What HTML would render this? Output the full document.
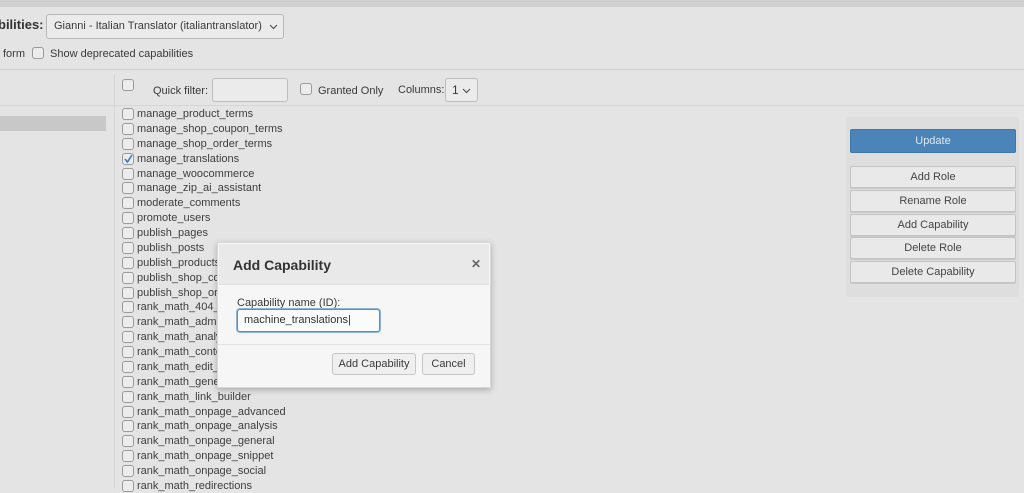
<!DOCTYPE html>
<html><head><style>
body{margin:0;width:1024px;height:489px;overflow:hidden;background:#e4e4e4;font-family:"Liberation Sans",sans-serif;color:#3a3a3a;position:relative}
.a{position:absolute}
.cb{position:absolute;width:10px;height:10px;border:1px solid #9a9a9a;border-radius:3px;background:#ececec}
.it{position:absolute;left:137px;font-size:11px;color:#3e3e3e;line-height:13px}
.btn{position:absolute;left:850px;width:164px;height:20px;border:1px solid #c4c4c4;border-radius:2px;background:#e9e9e9;font-size:11px;text-align:center;line-height:20px;color:#444;box-shadow:0 1px 0 #c8c8c8}
</style></head><body>
<div class="a" style="left:0;top:0;width:1024px;height:7px;background:#cfcfcf"></div>
<div class="a" style="left:-2px;top:17px;font-size:13px;font-weight:bold;color:#333">bilities:</div>
<div class="a" style="left:46px;top:14px;width:236px;height:23px;border:1px solid #b8b8b8;border-radius:3px;background:#ebebeb;font-size:11px;line-height:23px;text-indent:7px;color:#3a3a3a;white-space:nowrap">Gianni - Italian Translator (italiantranslator)<svg style="position:absolute;left:222px;top:9px" width="9" height="6"><path d="M1 1l3.5 3.5L8 1" fill="none" stroke="#555" stroke-width="1.2"/></svg></div>
<div class="a" style="left:3px;top:48px;font-size:11px">form</div>
<div class="cb" style="left:32px;top:47px"></div>
<div class="a" style="left:50px;top:48px;font-size:11px">Show deprecated capabilities</div>
<div class="a" style="left:0;top:69px;width:1024px;height:1px;background:#d2d2d2"></div>
<div class="a" style="left:114px;top:74px;width:1px;height:415px;background:#d6d6d6"></div>
<div class="a" style="left:0;top:105px;width:1024px;height:1px;background:#d6d6d6"></div>
<div class="cb" style="left:122px;top:79px"></div>
<div class="a" style="left:153px;top:85px;font-size:11px">Quick filter:</div>
<div class="a" style="left:212px;top:78px;width:74px;height:22px;border:1px solid #bdbdbd;border-radius:3px;background:#ebebeb"></div>
<div class="cb" style="left:300px;top:83px"></div>
<div class="a" style="left:318px;top:85px;font-size:11px">Granted Only</div>
<div class="a" style="left:398px;top:84px;font-size:11px">Columns:</div>
<div class="a" style="left:445px;top:78px;width:31px;height:22px;border:1px solid #bdbdbd;border-radius:3px;background:#ebebeb;font-size:12px;line-height:22px;text-indent:6px">1<svg style="position:absolute;left:16px;top:9px" width="9" height="6"><path d="M1 1l3.5 3.5L8 1" fill="none" stroke="#555" stroke-width="1.2"/></svg></div>
<div class="a" style="left:0;top:116px;width:106px;height:15px;background:#c8c8c8"></div>
<div id="list"></div>
<div class="a" style="left:846px;top:117px;width:173px;height:180px;background:#dedede;border-radius:3px"></div>
<div class="a" style="left:850px;top:129px;width:164px;height:22px;background:#4a84b8;border:1px solid #3f77a8;border-radius:2px;color:#dfe8f0;font-size:11px;text-align:center;line-height:22px">Update</div>
<div class="btn" style="top:166px">Add Role</div>
<div class="btn" style="top:190px">Rename Role</div>
<div class="btn" style="top:214px">Add Capability</div>
<div class="btn" style="top:237px">Delete Role</div>
<div class="btn" style="top:261px">Delete Capability</div>
<div class="a" style="left:217px;top:242px;width:272px;height:144px;background:#f6f6f6;border:1px solid #d8d8d8;box-shadow:0 2px 6px rgba(0,0,0,.25)">
 <div style="height:40px;background:#e9e9e9;border-bottom:1px solid #e0e0e0;margin:1px"></div>
 <div class="a" style="left:15px;top:14px;font-size:14px;font-weight:bold;color:#333">Add Capability</div>
 <div class="a" style="left:253px;top:14px;font-size:12px;font-weight:bold;color:#666">✕</div>
 <div class="a" style="left:19px;top:54px;font-size:11px">Capability name (ID):</div>
 <div class="a" style="left:19px;top:66px;width:141px;height:21px;border:1px solid #5b8fc0;border-radius:3px;background:#fbfbfb;box-shadow:0 0 0 1px #8db4d8;font-size:11px;line-height:21px;text-indent:6px;color:#333">machine_translations|</div>
 <div class="a" style="left:0;top:101px;width:272px;height:1px;background:#e2e2e2"></div>
 <div class="a" style="left:114px;top:110px;width:82px;height:20px;border:1px solid #c6c6c6;border-radius:3px;background:#efefef;font-size:11px;line-height:20px;text-align:center">Add Capability</div>
 <div class="a" style="left:204px;top:110px;width:51px;height:20px;border:1px solid #c6c6c6;border-radius:3px;background:#efefef;font-size:11px;line-height:20px;text-align:center">Cancel</div>
</div>
<script>
var n=["manage_product_terms","manage_shop_coupon_terms","manage_shop_order_terms","manage_translations","manage_woocommerce","manage_zip_ai_assistant","moderate_comments","promote_users","publish_pages","publish_posts","publish_products","publish_shop_coupons","publish_shop_orders","rank_math_404_monitor","rank_math_admin_bar","rank_math_analytics","rank_math_content_ai","rank_math_edit_htaccess","rank_math_general","rank_math_link_builder","rank_math_onpage_advanced","rank_math_onpage_analysis","rank_math_onpage_general","rank_math_onpage_snippet","rank_math_onpage_social","rank_math_redirections"];
var h="";n.forEach(function(s,i){var y=108+i*14.88;h+='<div class="cb" style="left:122px;top:'+(y)+'px"></div>'+(i==3?'<svg class="a" style="left:123px;top:'+(y+1)+'px" width="11" height="10"><path d="M2 5l2.5 3L9 1" fill="none" stroke="#3a7ac0" stroke-width="1.6"/></svg>':'')+'<div class="it" style="top:'+y+'px">'+s+'</div>';});
document.getElementById("list").innerHTML=h;
</script>
</body></html>
